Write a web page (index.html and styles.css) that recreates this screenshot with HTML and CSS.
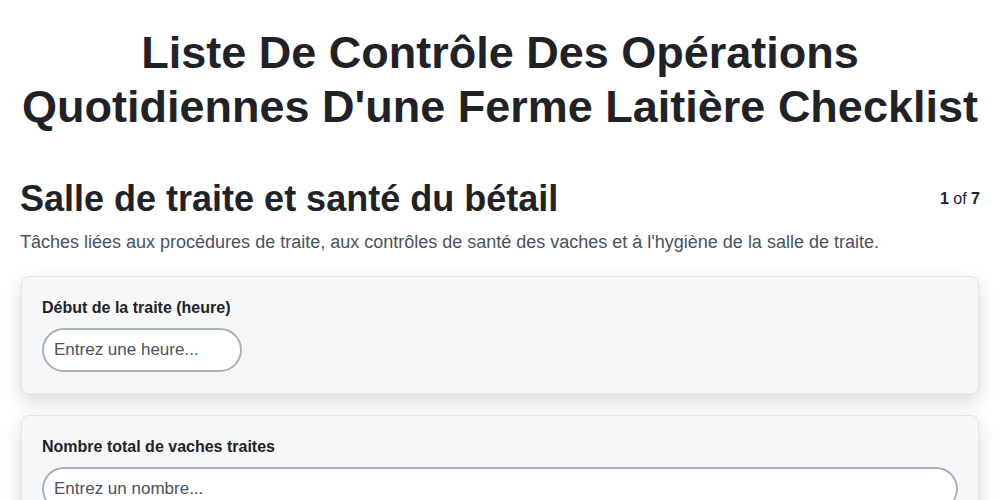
FILE: index.html
```html
<!DOCTYPE html>
<html lang="fr">
<head>
  <meta charset="UTF-8">
  <title>Liste De Contrôle – Ferme Laitière</title>
  <link rel="stylesheet" href="styles.css">
</head>
<body>
  <h1 class="page-title">Liste De Contrôle Des Opérations Quotidiennes D'une Ferme Laitière Checklist</h1>

  <section class="section">
    <div class="section-head">
      <h2>Salle de traite et santé du bétail</h2>
      <div class="step"><b>1</b> of <b>7</b></div>
    </div>
    <p class="section-desc">Tâches liées aux procédures de traite, aux contrôles de santé des vaches et à l'hygiène de la salle de traite.</p>

    <div class="card">
      <label for="startTime">Début de la traite (heure)</label>
      <input type="text" id="startTime" class="field field-short" placeholder="Entrez une heure...">
    </div>

    <div class="card">
      <label for="cowCount">Nombre total de vaches traites</label>
      <input type="text" id="cowCount" class="field" placeholder="Entrez un nombre...">
    </div>
  </section>
</body>
</html>
```

FILE: styles.css
```css
body {
  font-family: "Liberation Sans", Arial, sans-serif;
  background: #fff;
  color: #1f2328;
  margin: 0;
  padding: 20px;
}
.page-title {
  text-align: center;
  font-size: 45px;
  line-height: 54px;
  margin: 6px 0 44px;
  padding: 0;
}
.section-head {
  display: flex;
  justify-content: space-between;
  align-items: flex-start;
}
.section-head h2 {
  font-size: 36px;
  line-height: 42px;
  margin: 0;
}
.step {
  font-size: 16px;
  margin-top: 12px;
}
.section-desc {
  color: #4a5160;
  font-size: 18px;
  margin: 12px 0 23px;
}
.card {
  background: #f6f7f9;
  border: 1px solid #e3e5ec;
  border-radius: 8px;
  box-shadow: 0 8px 18px rgba(20,25,40,0.16);
  padding: 22px 20px 21px;
  margin: 0 1px 21px;
}
.card label {
  display: block;
  font-weight: bold;
  font-size: 16px;
  margin-bottom: 11px;
}
.field {
  box-sizing: border-box;
  width: 100%;
  height: 44px;
  padding: 0 10px;
  border: 2px solid #a9b1ba;
  border-radius: 22px;
  background: #fff;
  font-family: inherit;
  font-size: 17px;
  color: #1f2328;
}
.field::placeholder {
  color: #4a5160;
}
.field-short {
  width: 200px;
}
```
